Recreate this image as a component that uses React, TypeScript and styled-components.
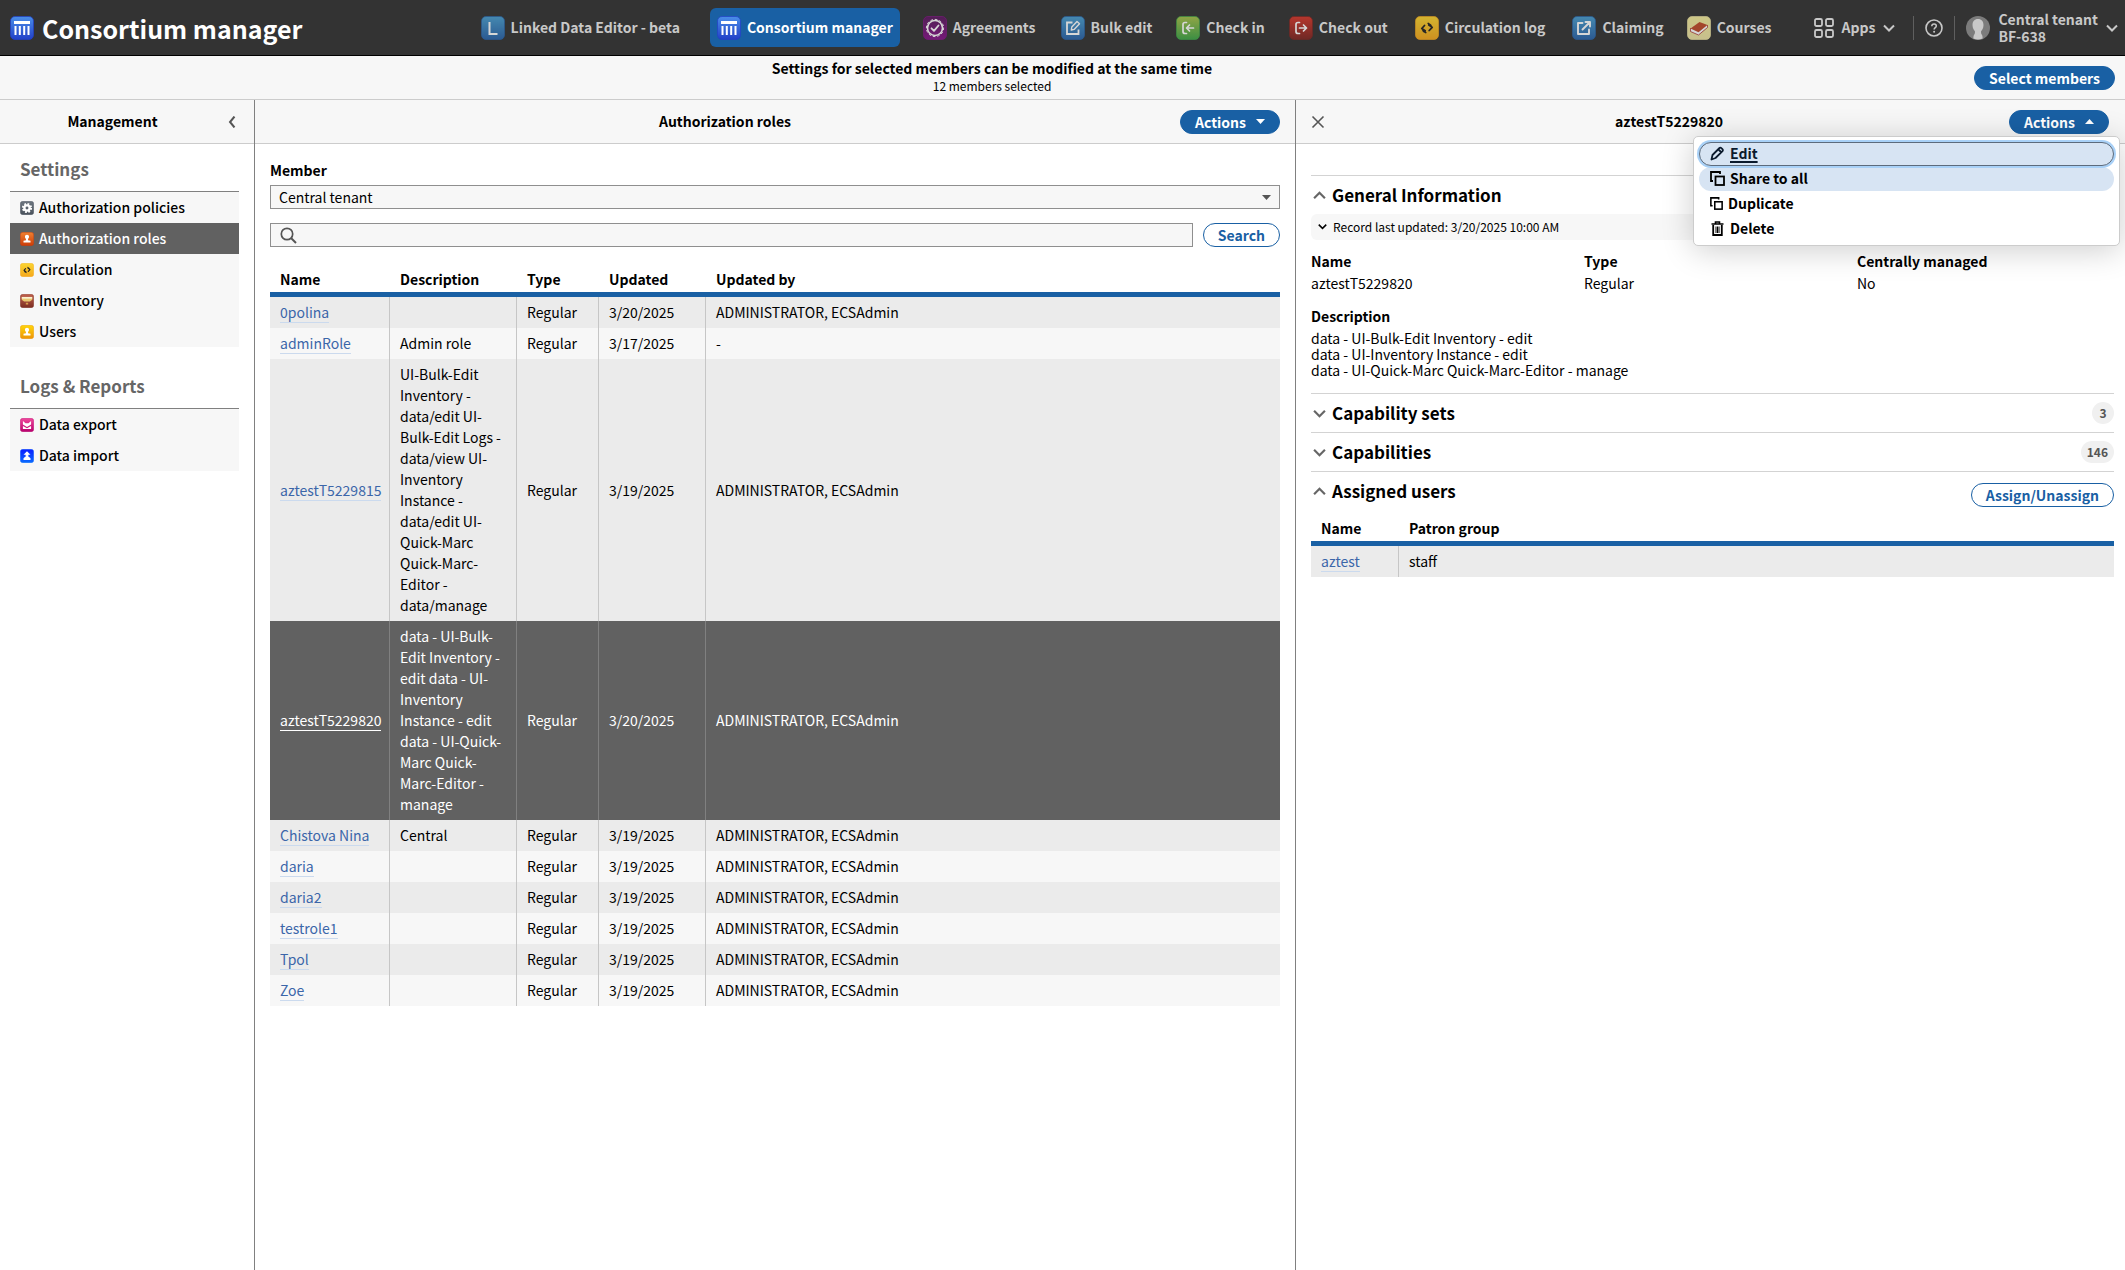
import React from 'react';
import styled, { createGlobalStyle, css } from 'styled-components';

const blue = '#1960a4';
const font = '"Noto Sans CJK SC", "Noto Sans", sans-serif';

const GlobalStyle = createGlobalStyle`
  *, *::before, *::after { box-sizing: border-box; }
  body { margin: 0; background: #fff; color: #000; font: 400 14px/21px ${font}; }
  button, input, select { font: inherit; color: inherit; }
  h1, h2, h3, p, ul, dl, dd { margin: 0; padding: 0; }
  ul { list-style: none; }
  svg { display: block; flex: none; }
`;

/* ---------- layout ---------- */

const Page = styled.div`
  display: flex;
  flex-direction: column;
  min-height: 100vh;
`;

const Header = styled.header`
  display: flex;
  align-items: center;
  height: 56px;
  padding: 0 7px 0 10px;
  background: #333;
  border-bottom: 1px solid #000;
  color: #c8c8c8;
`;

const Brand = styled.h1`
  display: flex;
  align-items: center;
  gap: 8px;
  color: #fff;
  font-size: 25px;
  line-height: 32px;
  font-weight: 700;
  white-space: nowrap;
`;

const Nav = styled.nav`
  margin-left: auto;
`;

const NavList = styled.ul`
  display: flex;
  align-items: center;
`;

const NavItem = styled.li<{ $space: number }>`
  padding: 0 ${(p) => p.$space}px;
`;

const NavLink = styled.a<{ $active?: boolean }>`
  display: flex;
  align-items: center;
  gap: 6px;
  height: 39px;
  padding: 0 7px;
  border-radius: 6px;
  color: inherit;
  font-weight: 600;
  text-decoration: none;
  white-space: nowrap;
  svg { opacity: 0.8; }
  ${(p) =>
    p.$active &&
    css`
      background: ${blue};
      color: #fff;
      svg { opacity: 1; }
    `}
`;

const HeaderTools = styled.div`
  display: flex;
  align-items: center;
  margin-left: 20px;
`;

const ToolButton = styled.button<{ $wide?: boolean }>`
  display: flex;
  align-items: center;
  gap: 8px;
  padding: 0 ${(p) => (p.$wide ? 18 : 11)}px 0 11px;
  border: 0;
  background: none;
  font-weight: 600;
  line-height: 17px;
  text-align: left;
  white-space: nowrap;
  &:last-child { padding-right: 0; }
`;

const Separator = styled.span`
  width: 1px;
  height: 24px;
  background: #5f5f5f;
`;

const Banner = styled.section`
  display: flex;
  align-items: center;
  height: 44px;
  padding: 0 10px;
  background: #f7f7f7;
  border-bottom: 1px solid #ccc;
`;

const BannerText = styled.div`
  flex: 1;
  padding-bottom: 2px;
  text-align: center;
  line-height: 18px;
  strong { font-weight: 600; }
  p { font-size: 12px; }
`;

const Panes = styled.main`
  flex: 1;
  display: grid;
  grid-template-columns: 51fr 208fr 166fr;
`;

const Pane = styled.section<{ $side?: 'left' | 'right' }>`
  min-width: 0;
  ${(p) => p.$side === 'left' && 'border-right: 1px solid #808080;'}
  ${(p) => p.$side === 'right' && 'border-left: 1px solid #808080;'}
`;

const PaneHeader = styled.header`
  display: flex;
  align-items: center;
  height: 44px;
  padding: 0 16px 0 11px;
  background: #f7f7f7;
  border-bottom: 1px solid #ccc;
`;

const RolesHeader = styled(PaneHeader)`
  padding: 0 15px;
`;

const ManagementHeader = styled(PaneHeader)`
  padding: 0 11px 0 4px;
`;

const PaneTitle = styled.h2`
  flex: 1;
  font-size: 14px;
  line-height: 21px;
  font-weight: 700;
  text-align: center;
`;

const IconButton = styled.button`
  display: grid;
  place-items: center;
  width: 22px;
  height: 24px;
  padding: 0;
  border: 0;
  background: none;
  color: #555;
`;

const PillButton = styled.button<{ $outline?: boolean }>`
  display: inline-flex;
  align-items: center;
  justify-content: center;
  gap: 10px;
  height: 24px;
  padding: 0 14px;
  border: 1px solid ${blue};
  border-radius: 12px;
  background: ${(p) => (p.$outline ? '#fff' : blue)};
  color: ${(p) => (p.$outline ? blue : '#fff')};
  font-weight: 600;
  line-height: 20px;
  white-space: nowrap;
`;

/* ---------- management ---------- */

const NavSection = styled.section`
  padding: 13px 15px 0 10px;
  & + & { padding-top: 27px; }
`;

const SectionTitle = styled.h3`
  padding: 0 10px 10px;
  color: #666;
  font-size: 17px;
  line-height: 24px;
  font-weight: 700;
`;

const SideList = styled.ul`
  border-top: 1px solid #808080;
  background: #f7f7f7;
`;

const SideLink = styled.a<{ $active?: boolean }>`
  display: flex;
  align-items: center;
  gap: 5px;
  height: 31px;
  padding: 0 10px;
  background: ${(p) => (p.$active ? '#616161' : 'transparent')};
  color: ${(p) => (p.$active ? '#fff' : '#000')};
  font-weight: 500;
  text-decoration: none;
  white-space: nowrap;
`;

/* ---------- roles ---------- */

const RolesBody = styled.div`
  padding: 15px;
`;

const Field = styled.div`
  display: grid;
  gap: 4px;
  label { font-weight: 700; line-height: 22px; }
`;

const SelectWrap = styled.div`
  position: relative;
  color: #555;
  svg {
    position: absolute;
    right: 9px;
    top: 10px;
    pointer-events: none;
  }
`;

const Select = styled.select`
  appearance: none;
  width: 100%;
  height: 24px;
  padding: 0 8px;
  border: 1px solid #8f8f8f;
  border-radius: 0;
  background: #f7f7f7;
  color: #000;
  line-height: 20px;
`;

const SearchRow = styled.form`
  display: flex;
  gap: 10px;
  margin: 14px 0 20px;
`;

const SearchBox = styled.label`
  flex: 1;
  display: flex;
  align-items: center;
  gap: 8px;
  height: 24px;
  padding: 0 9px;
  border: 1px solid #8f8f8f;
  background: #f7f7f7;
  input {
    flex: 1;
    min-width: 0;
    padding: 0;
    border: 0;
    outline: 0;
    background: none;
  }
`;

const Table = styled.table`
  width: 100%;
  table-layout: fixed;
  border-collapse: separate;
  border-spacing: 0;
  text-align: left;
  th {
    padding: 2px 10px;
    border-bottom: 5px solid ${blue};
    font-weight: 700;
  }
  td {
    padding: 5px 10px;
    border-right: 1px solid #c6c6c6;
    vertical-align: middle;
  }
  td:last-child { border-right: 0; }
`;

const Row = styled.tr<{ $selected?: boolean }>`
  background: #f7f7f7;
  &:nth-child(odd) { background: #ebebeb; }
  ${(p) =>
    p.$selected &&
    css`
      && { background: #616161; }
      color: #fff;
      td { border-color: #808080; }
      a { color: #fff; border-color: #fff; }
    `}
`;

const CellLink = styled.a`
  border-bottom: 1px solid #cbdaee;
  color: #3b66a9;
  text-decoration: none;
`;

const Col = styled.col<{ $width?: number }>`
  ${(p) => p.$width && `width: ${p.$width}px;`}
`;

/* ---------- details ---------- */

const MenuAnchor = styled.div`
  position: relative;
`;

const Menu = styled.div`
  position: absolute;
  z-index: 2;
  top: 26px;
  right: -11px;
  display: grid;
  gap: 1px;
  width: 427px;
  padding: 5px 5px 4px;
  border: 1px solid #ccc;
  border-radius: 5px;
  background: #fff;
  box-shadow: 0 4px 32px rgba(0, 0, 0, 0.2);
`;

const MenuItem = styled.button<{ $lit?: boolean; $focused?: boolean }>`
  display: flex;
  align-items: center;
  gap: 5px;
  height: 24px;
  padding: 0 10px 1px;
  border: 1px solid transparent;
  border-radius: 12px;
  background: ${(p) => (p.$lit ? '#d7e4f3' : 'transparent')};
  font-weight: 600;
  line-height: 20px;
  text-align: left;
  ${(p) =>
    p.$focused &&
    css`
      position: relative;
      border-color: #5d6b7c;
      box-shadow: 0 0 0 2px #a9d1f7;
      color: #0b1a2d;
      text-decoration: underline;
      text-decoration-thickness: 2px;
      text-underline-offset: 2px;
    `}
`;

const DetailsBody = styled.div`
  padding: 31px 11px 0 15px;
`;

const Accordion = styled.section`
  border-top: 1px solid #d3d3d3;
`;

const AccordionHead = styled.div`
  display: flex;
  align-items: center;
  justify-content: space-between;
  height: 38px;
  ${PillButton} { margin-top: 8px; }
`;

const AccordionToggle = styled.button`
  display: flex;
  align-items: center;
  gap: 6px;
  padding: 0 0 0 2px;
  border: 0;
  background: none;
  h3 { font-size: 17px; line-height: 24px; font-weight: 700; }
  svg { color: #666; }
`;

const Badge = styled.span`
  min-width: 22px;
  height: 22px;
  padding: 0 6px;
  border-radius: 11px;
  background: #f0f0f0;
  color: #555;
  font-size: 12px;
  line-height: 21px;
  font-weight: 600;
  text-align: center;
`;

const UpdatedBar = styled.button`
  display: flex;
  align-items: center;
  gap: 6px;
  width: 100%;
  height: 26px;
  padding: 0 7px 1px;
  border: 0;
  border-radius: 6px;
  background: #f7f7f7;
  font-size: 12px;
`;

const Facts = styled.dl`
  display: grid;
  grid-template-columns: repeat(3, 1fr);
  gap: 11px 16px;
  padding: 9px 0 15px;
  dt { font-weight: 700; line-height: 24px; }
  dd { line-height: 20px; }
`;

const WideFact = styled.div`
  grid-column: 1 / -1;
  dd { line-height: 16px; white-space: pre-line; padding-top: 2px; }
`;

const UsersTable = styled(Table)`
  margin-top: 6px;
`;

/* ---------- icons ---------- */

type TileProps = { size?: number; from: string; to: string; id: string; children: React.ReactNode };

const Tile = ({ size = 24, from, to, id, children }: TileProps) => (
  <svg width={size} height={size} viewBox="0 0 24 24" aria-hidden="true">
    <defs>
      <linearGradient id={id} x1="0" y1="0" x2="0" y2="1">
        <stop offset="0" stopColor={from} />
        <stop offset="1" stopColor={to} />
      </linearGradient>
    </defs>
    <rect x="0.5" y="0.5" width="23" height="23" rx="4.5" fill={`url(#${id})`} stroke={to} strokeOpacity="0.7" />
    {children}
  </svg>
);

const line = {
  fill: 'none',
  stroke: '#fff',
  strokeWidth: 2,
  strokeLinecap: 'round' as const,
  strokeLinejoin: 'round' as const,
};

const ConsortiumIcon = ({ id }: { id: string }) => (
  <Tile id={id} from="#4a8ee8" to="#2240c8">
    <path d="M4 5h16v3H4zM4.500 10h2v9h-2zM8.800 10h2v9h-2zM13.200 10h2v9h-2zM17.500 10h2v9h-2z" fill="#fff" />
  </Tile>
);

const LinkedIcon = () => (
  <Tile id="linked" from="#4a9fd0" to="#2a64aa">
    <path d="M8.500 6v12h8" {...line} strokeLinecap="butt" strokeLinejoin="miter" />
  </Tile>
);

const AgreementsIcon = () => (
  <Tile id="agreements" from="#5a1a5e" to="#86148a">
    <circle cx="12" cy="12" r="7.500" {...line} strokeWidth="1.600" />
    <circle cx="12" cy="12" r="8.600" {...line} strokeWidth="1" strokeDasharray="1.800 2.700" />
    <path d="M8.500 12.300l2.500 2.500 4.500-5.300" {...line} strokeWidth="1.800" />
  </Tile>
);

const BulkIcon = () => (
  <Tile id="bulk" from="#4a9fd0" to="#2a64aa">
    <path d="M11.500 6.500H6V18h11.500v-4.500" {...line} strokeWidth="1.800" strokeLinecap="butt" strokeLinejoin="miter" />
    <path d="M10.300 14l.5-3L16 5.500l2.500 2.200-5.400 5.700z" {...line} strokeWidth="1.400" />
  </Tile>
);

const CheckInIcon = () => (
  <Tile id="checkin" from="#a8c24a" to="#3fa648">
    <path d="M10.500 6.500H9C7.500 6.500 7 7 7 8.500v7c0 1.500.5 2 2 2h1.500M17.500 12H11M13.500 9L10.500 12l3 3" {...line} strokeWidth="1.700" />
  </Tile>
);

const CheckOutIcon = () => (
  <Tile id="checkout" from="#d8382c" to="#7e2622">
    <path d="M10.500 6.500H9C7.500 6.500 7 7 7 8.500v7c0 1.500.5 2 2 2h1.500M10.500 12h7M14.500 9l3 3-3 3" {...line} strokeWidth="1.700" />
  </Tile>
);

const CirculationIcon = ({ id, size }: { id: string; size?: number }) => (
  <Tile id={id} size={size} from="#fbd530" to="#f5a81c">
    <path
      d="M9.500 9.500L6.800 12.500l3.400 2.300M7.200 12.500c.6 2.400 2 3.500 3.500 4M14.200 14.500l3-3.200-3.400-2.300M16.800 11.500c-.6-2.400-2-3.500-3.500-4"
      {...line}
      stroke="#222"
      strokeWidth="1.800"
    />
  </Tile>
);

const ClaimingIcon = () => (
  <Tile id="claiming" from="#4a9fd0" to="#2a64aa">
    <path d="M10.500 7H6v11h11v-4.500M13.500 6H18v4.500M17.500 6.500l-7 7" {...line} strokeWidth="1.900" />
  </Tile>
);

const CoursesIcon = () => (
  <Tile id="courses" from="#f4ec9c" to="#ede3a4">
    <path d="M3.500 12v3.500l8 3.500 9-7.500V9" fill="#fff" stroke="#a33" strokeWidth="0.800" />
    <path d="M3.500 12.500L12.500 6l8 3-9 7.200z" fill="#c04a2a" />
  </Tile>
);

const PoliciesIcon = () => (
  <Tile id="policies" size={14} from="#6d7680" to="#4a525c">
    <circle cx="12" cy="12" r="4.500" fill="none" stroke="#fff" strokeWidth="4" />
    <circle cx="12" cy="12" r="7" fill="none" stroke="#fff" strokeWidth="3.500" strokeDasharray="3 2.498" />
  </Tile>
);

const PersonTile = ({ id, from, to }: { id: string; from: string; to: string }) => (
  <Tile id={id} size={14} from={from} to={to}>
    <path d="M12 4.500c2.200 0 3.500 1.500 3.500 3.500 0 1.800-1 3-1.700 4v2l4.200 1.200v3H6v-3L10.200 14v-2C9.500 11 8.500 9.800 8.500 8c0-2 1.300-3.500 3.500-3.500z" fill="#fff" />
  </Tile>
);

const InventoryIcon = () => (
  <Tile id="inventory" size={14} from="#c0604c" to="#7c2e22">
    <path d="M3 6h18v4l-4 3H7l-4-3z" fill="#e8c870" />
    <path d="M3 5h18v3H3z" fill="#fbf0d0" />
    <path d="M10 15h4v3h-4z" fill="#d8a050" />
  </Tile>
);

const ExportIcon = () => (
  <Tile id="export" size={14} from="#f0489c" to="#b8006c">
    <path d="M5 5l4.500 4h5L19 5v6l-7 4.500L5 11zM5 13.500l7 4 7-4V19H5z" fill="#fff" />
  </Tile>
);

const ImportIcon = () => (
  <Tile id="import" size={14} from="#0a1cff" to="#0a6cff">
    <path d="M12 4l6 6h-3.500v1.500H9.500V10H6zM12 10.500l6 5.500v3H6v-3z" fill="#fff" />
  </Tile>
);

const Chevron = ({ dir = 'down', size = 12, weight = 2 }: { dir?: 'down' | 'up' | 'left'; size?: number; weight?: number }) => {
  const d = { down: 'M1 3.500l5 5 5-5', up: 'M1 8.500l5-5 5 5', left: 'M8.500 0.500L4 6l4.500 5.500' }[dir];
  return (
    <svg width={size} height={size} viewBox="0 0 12 12" aria-hidden="true">
      <path d={d} fill="none" stroke="currentColor" strokeWidth={weight} />
    </svg>
  );
};

const Triangle = ({ up }: { up?: boolean }) => (
  <svg width="9" height="5" viewBox="0 0 9 5" aria-hidden="true">
    <path d={up ? 'M0 5l4.500-5L9 5z' : 'M0 0h9l-4.500 5z'} fill="currentColor" />
  </svg>
);

const CloseIcon = () => (
  <svg width="14" height="14" viewBox="0 0 14 14" aria-hidden="true">
    <path d="M1.500 1.500l11 11M12.500 1.500l-11 11" stroke="currentColor" strokeWidth="1.600" />
  </svg>
);

const SearchIcon = () => (
  <svg width="17" height="17" viewBox="0 0 17 17" aria-hidden="true">
    <circle cx="7" cy="7" r="5.700" fill="none" stroke="#555" strokeWidth="1.700" />
    <path d="M11 11l5 5" stroke="#555" strokeWidth="2" />
  </svg>
);

const AppsIcon = () => (
  <svg width="20" height="20" viewBox="0 0 20 20" fill="none" stroke="currentColor" strokeWidth="1.800" aria-hidden="true">
    <rect x="1" y="1" width="7" height="7" rx="1.500" />
    <rect x="12" y="1" width="7" height="7" rx="1.500" />
    <rect x="1" y="12" width="7" height="7" rx="1.500" />
    <rect x="12" y="12" width="7" height="7" rx="1.500" />
  </svg>
);

const HelpIcon = () => (
  <svg width="18" height="18" viewBox="0 0 18 18" fill="none" stroke="currentColor" aria-hidden="true">
    <circle cx="9" cy="9" r="8" strokeWidth="1.600" />
    <path d="M6.800 7.200c0-1.400 1-2.200 2.300-2.200s2.200.8 2.200 2c0 1.700-2.200 1.700-2.200 3.500" strokeWidth="1.500" />
    <circle cx="9.100" cy="12.800" r="1" fill="currentColor" stroke="none" />
  </svg>
);

const Avatar = () => (
  <svg width="24" height="24" viewBox="0 0 24 24" aria-hidden="true">
    <circle cx="12" cy="12" r="12" fill="#7c7c7c" />
    <path d="M12 3c3.600 0 5.500 2.500 5.500 6 0 3.300-1.500 5-2.500 6.500 0 2 .4 2.500 1 3.500.6 1 .6 2.500.6 3.500a12 12 0 0 1-9.200 0c0-1 0-2.500.6-3.500.6-1 1-1.500 1-3.500C8 14 6.500 12.300 6.500 9c0-3.500 1.900-6 5.500-6z" fill="#c9c9c9" />
  </svg>
);

const PencilIcon = () => (
  <svg width="15" height="15" viewBox="0 0 15 15" fill="none" stroke="currentColor" strokeWidth="1.800" strokeLinejoin="round" aria-hidden="true">
    <path d="M1.500 13.500l1-4.500 7-7c1-1 4.500 1.500 3 3.200L5.500 12zM8.500 3.500L11 6" />
  </svg>
);

const CopyIcon = ({ size }: { size: number }) => (
  <svg width={size} height={size} viewBox="0 0 15 15" fill="none" stroke="currentColor" strokeWidth="1.800" aria-hidden="true">
    <rect x="5.500" y="5.500" width="8.500" height="8.500" />
    <path d="M3 10H1V1h9v2" />
  </svg>
);

const TrashIcon = () => (
  <svg width="15" height="15" viewBox="0 0 15 15" fill="none" stroke="currentColor" aria-hidden="true">
    <path d="M1.500 3h12M5.500 2.500V1h4v1.500" strokeWidth="1.600" />
    <path d="M3.200 4v10h8.600V4" strokeWidth="1.800" />
    <path d="M6 5.500v6.500M7.500 5.500v6.500M9 5.500v6.500" strokeWidth="1" />
  </svg>
);

/* ---------- data ---------- */

const apps = [
  { label: 'Linked Data Editor - beta', icon: <LinkedIcon /> },
  { label: 'Consortium manager', icon: <ConsortiumIcon id="consortium-nav" />, active: true },
  { label: 'Agreements', icon: <AgreementsIcon /> },
  { label: 'Bulk edit', icon: <BulkIcon /> },
  { label: 'Check in', icon: <CheckInIcon /> },
  { label: 'Check out', icon: <CheckOutIcon /> },
  { label: 'Circulation log', icon: <CirculationIcon id="circulation-log" /> },
  { label: 'Claiming', icon: <ClaimingIcon /> },
  { label: 'Courses', icon: <CoursesIcon /> },
];

const sections = [
  {
    title: 'Settings',
    items: [
      { label: 'Authorization policies', icon: <PoliciesIcon /> },
      { label: 'Authorization roles', icon: <PersonTile id="roles" from="#f08030" to="#cc3c08" />, active: true },
      { label: 'Circulation', icon: <CirculationIcon id="circulation" size={14} /> },
      { label: 'Inventory', icon: <InventoryIcon /> },
      { label: 'Users', icon: <PersonTile id="users" from="#ffd60a" to="#ec9408" /> },
    ],
  },
  {
    title: 'Logs & Reports',
    items: [
      { label: 'Data export', icon: <ExportIcon /> },
      { label: 'Data import', icon: <ImportIcon /> },
    ],
  },
];

const admin = 'ADMINISTRATOR, ECSAdmin';

const roles = [
  { name: '0polina', description: '', updated: '3/20/2025', by: admin },
  { name: 'adminRole', description: 'Admin role', updated: '3/17/2025', by: '-' },
  {
    name: 'aztestT5229815',
    description:
      'UI-Bulk-Edit Inventory - data/edit UI-Bulk-Edit Logs - data/view UI-Inventory Instance - data/edit UI-Quick-Marc Quick-Marc-Editor - data/manage',
    updated: '3/19/2025',
    by: admin,
  },
  {
    name: 'aztestT5229820',
    description:
      'data - UI-Bulk-Edit Inventory - edit data - UI-Inventory Instance - edit data - UI-Quick-Marc Quick-Marc-Editor - manage',
    updated: '3/20/2025',
    by: admin,
    selected: true,
  },
  { name: 'Chistova Nina', description: 'Central', updated: '3/19/2025', by: admin },
  { name: 'daria', description: '', updated: '3/19/2025', by: admin },
  { name: 'daria2', description: '', updated: '3/19/2025', by: admin },
  { name: 'testrole1', description: '', updated: '3/19/2025', by: admin },
  { name: 'Tpol', description: '', updated: '3/19/2025', by: admin },
  { name: 'Zoe', description: '', updated: '3/19/2025', by: admin },
];

/* ---------- page ---------- */

const navSpace = (label: string) => Math.round((label.length + 1) / 2);

const TopBar = () => (
  <Header>
    <Brand>
      <ConsortiumIcon id="consortium-brand" />
      Consortium manager
    </Brand>
    <Nav aria-label="Applications">
      <NavList>
        {apps.map((app) => (
          <NavItem key={app.label} $space={navSpace(app.label)}>
            <NavLink href="#" $active={app.active}>
              {app.icon}
              {app.label}
            </NavLink>
          </NavItem>
        ))}
      </NavList>
    </Nav>
    <HeaderTools>
      <ToolButton type="button" $wide>
        <AppsIcon />
        Apps
        <Chevron />
      </ToolButton>
      <Separator />
      <ToolButton type="button" aria-label="Help">
        <HelpIcon />
      </ToolButton>
      <Separator />
      <ToolButton type="button">
        <Avatar />
        <span>
          Central tenant
          <br />
          BF-638
        </span>
        <Chevron />
      </ToolButton>
    </HeaderTools>
  </Header>
);

const Management = () => (
  <Pane $side="left">
    <ManagementHeader>
      <PaneTitle>Management</PaneTitle>
      <IconButton type="button" aria-label="Collapse pane">
        <Chevron dir="left" />
      </IconButton>
    </ManagementHeader>
    {sections.map((section) => (
      <NavSection key={section.title}>
        <SectionTitle>{section.title}</SectionTitle>
        <SideList>
          {section.items.map((item) => (
            <li key={item.label}>
              <SideLink href="#" $active={'active' in item && item.active}>
                {item.icon}
                {item.label}
              </SideLink>
            </li>
          ))}
        </SideList>
      </NavSection>
    ))}
  </Pane>
);

const Roles = () => (
  <Pane>
    <RolesHeader>
      <PaneTitle>Authorization roles</PaneTitle>
      <PillButton type="button">
        Actions
        <Triangle />
      </PillButton>
    </RolesHeader>
    <RolesBody>
      <Field>
        <label htmlFor="member">Member</label>
        <SelectWrap>
          <Select id="member" defaultValue="central">
            <option value="central">Central tenant</option>
          </Select>
          <Triangle />
        </SelectWrap>
      </Field>
      <SearchRow onSubmit={(e) => e.preventDefault()}>
        <SearchBox>
          <SearchIcon />
          <input type="text" aria-label="Search roles" />
        </SearchBox>
        <PillButton type="submit" $outline>
          Search
        </PillButton>
      </SearchRow>
      <Table>
        <colgroup>
          <Col $width={120} />
          <Col $width={127} />
          <Col $width={82} />
          <Col $width={107} />
          <Col />
        </colgroup>
        <thead>
          <tr>
            <th scope="col">Name</th>
            <th scope="col">Description</th>
            <th scope="col">Type</th>
            <th scope="col">Updated</th>
            <th scope="col">Updated by</th>
          </tr>
        </thead>
        <tbody>
          {roles.map((role) => (
            <Row key={role.name} $selected={role.selected}>
              <td>
                <CellLink href="#">{role.name}</CellLink>
              </td>
              <td>{role.description}</td>
              <td>Regular</td>
              <td>{role.updated}</td>
              <td>{role.by}</td>
            </Row>
          ))}
        </tbody>
      </Table>
    </RolesBody>
  </Pane>
);

const AccordionTitle = ({ open, children }: { open?: boolean; children: string }) => (
  <AccordionToggle type="button" aria-expanded={!!open}>
    <Chevron dir={open ? 'up' : 'down'} size={13} />
    <h3>{children}</h3>
  </AccordionToggle>
);

const Details = () => (
  <Pane $side="right">
    <PaneHeader>
      <IconButton type="button" aria-label="Close">
        <CloseIcon />
      </IconButton>
      <PaneTitle>aztestT5229820</PaneTitle>
      <MenuAnchor>
        <PillButton type="button" aria-expanded>
          Actions
          <Triangle up />
        </PillButton>
        <Menu>
          <MenuItem type="button" $lit $focused>
            <PencilIcon />
            Edit
          </MenuItem>
          <MenuItem type="button" $lit>
            <CopyIcon size={15} />
            Share to all
          </MenuItem>
          <MenuItem type="button">
            <CopyIcon size={13} />
            Duplicate
          </MenuItem>
          <MenuItem type="button">
            <TrashIcon />
            Delete
          </MenuItem>
        </Menu>
      </MenuAnchor>
    </PaneHeader>
    <DetailsBody>
      <Accordion>
        <AccordionHead>
          <AccordionTitle open>General Information</AccordionTitle>
        </AccordionHead>
        <UpdatedBar type="button">
          <Chevron size={9} />
          Record last updated: 3/20/2025 10:00 AM
        </UpdatedBar>
        <Facts>
          <div>
            <dt>Name</dt>
            <dd>aztestT5229820</dd>
          </div>
          <div>
            <dt>Type</dt>
            <dd>Regular</dd>
          </div>
          <div>
            <dt>Centrally managed</dt>
            <dd>No</dd>
          </div>
          <WideFact>
            <dt>Description</dt>
            <dd>
              {'data - UI-Bulk-Edit Inventory - edit\ndata - UI-Inventory Instance - edit\ndata - UI-Quick-Marc Quick-Marc-Editor - manage'}
            </dd>
          </WideFact>
        </Facts>
      </Accordion>
      <Accordion>
        <AccordionHead>
          <AccordionTitle>Capability sets</AccordionTitle>
          <Badge>3</Badge>
        </AccordionHead>
      </Accordion>
      <Accordion>
        <AccordionHead>
          <AccordionTitle>Capabilities</AccordionTitle>
          <Badge>146</Badge>
        </AccordionHead>
      </Accordion>
      <Accordion>
        <AccordionHead>
          <AccordionTitle open>Assigned users</AccordionTitle>
          <PillButton type="button" $outline>
            Assign/Unassign
          </PillButton>
        </AccordionHead>
        <UsersTable>
          <colgroup>
            <Col $width={88} />
            <Col />
          </colgroup>
          <thead>
            <tr>
              <th scope="col">Name</th>
              <th scope="col">Patron group</th>
            </tr>
          </thead>
          <tbody>
            <Row>
              <td>
                <CellLink href="#">aztest</CellLink>
              </td>
              <td>staff</td>
            </Row>
          </tbody>
        </UsersTable>
      </Accordion>
    </DetailsBody>
  </Pane>
);

export default function App() {
  return (
    <Page>
      <GlobalStyle />
      <TopBar />
      <Banner>
        <BannerText>
          <strong>Settings for selected members can be modified at the same time</strong>
          <p>12 members selected</p>
        </BannerText>
        <PillButton type="button">Select members</PillButton>
      </Banner>
      <Panes>
        <Management />
        <Roles />
        <Details />
      </Panes>
    </Page>
  );
}
